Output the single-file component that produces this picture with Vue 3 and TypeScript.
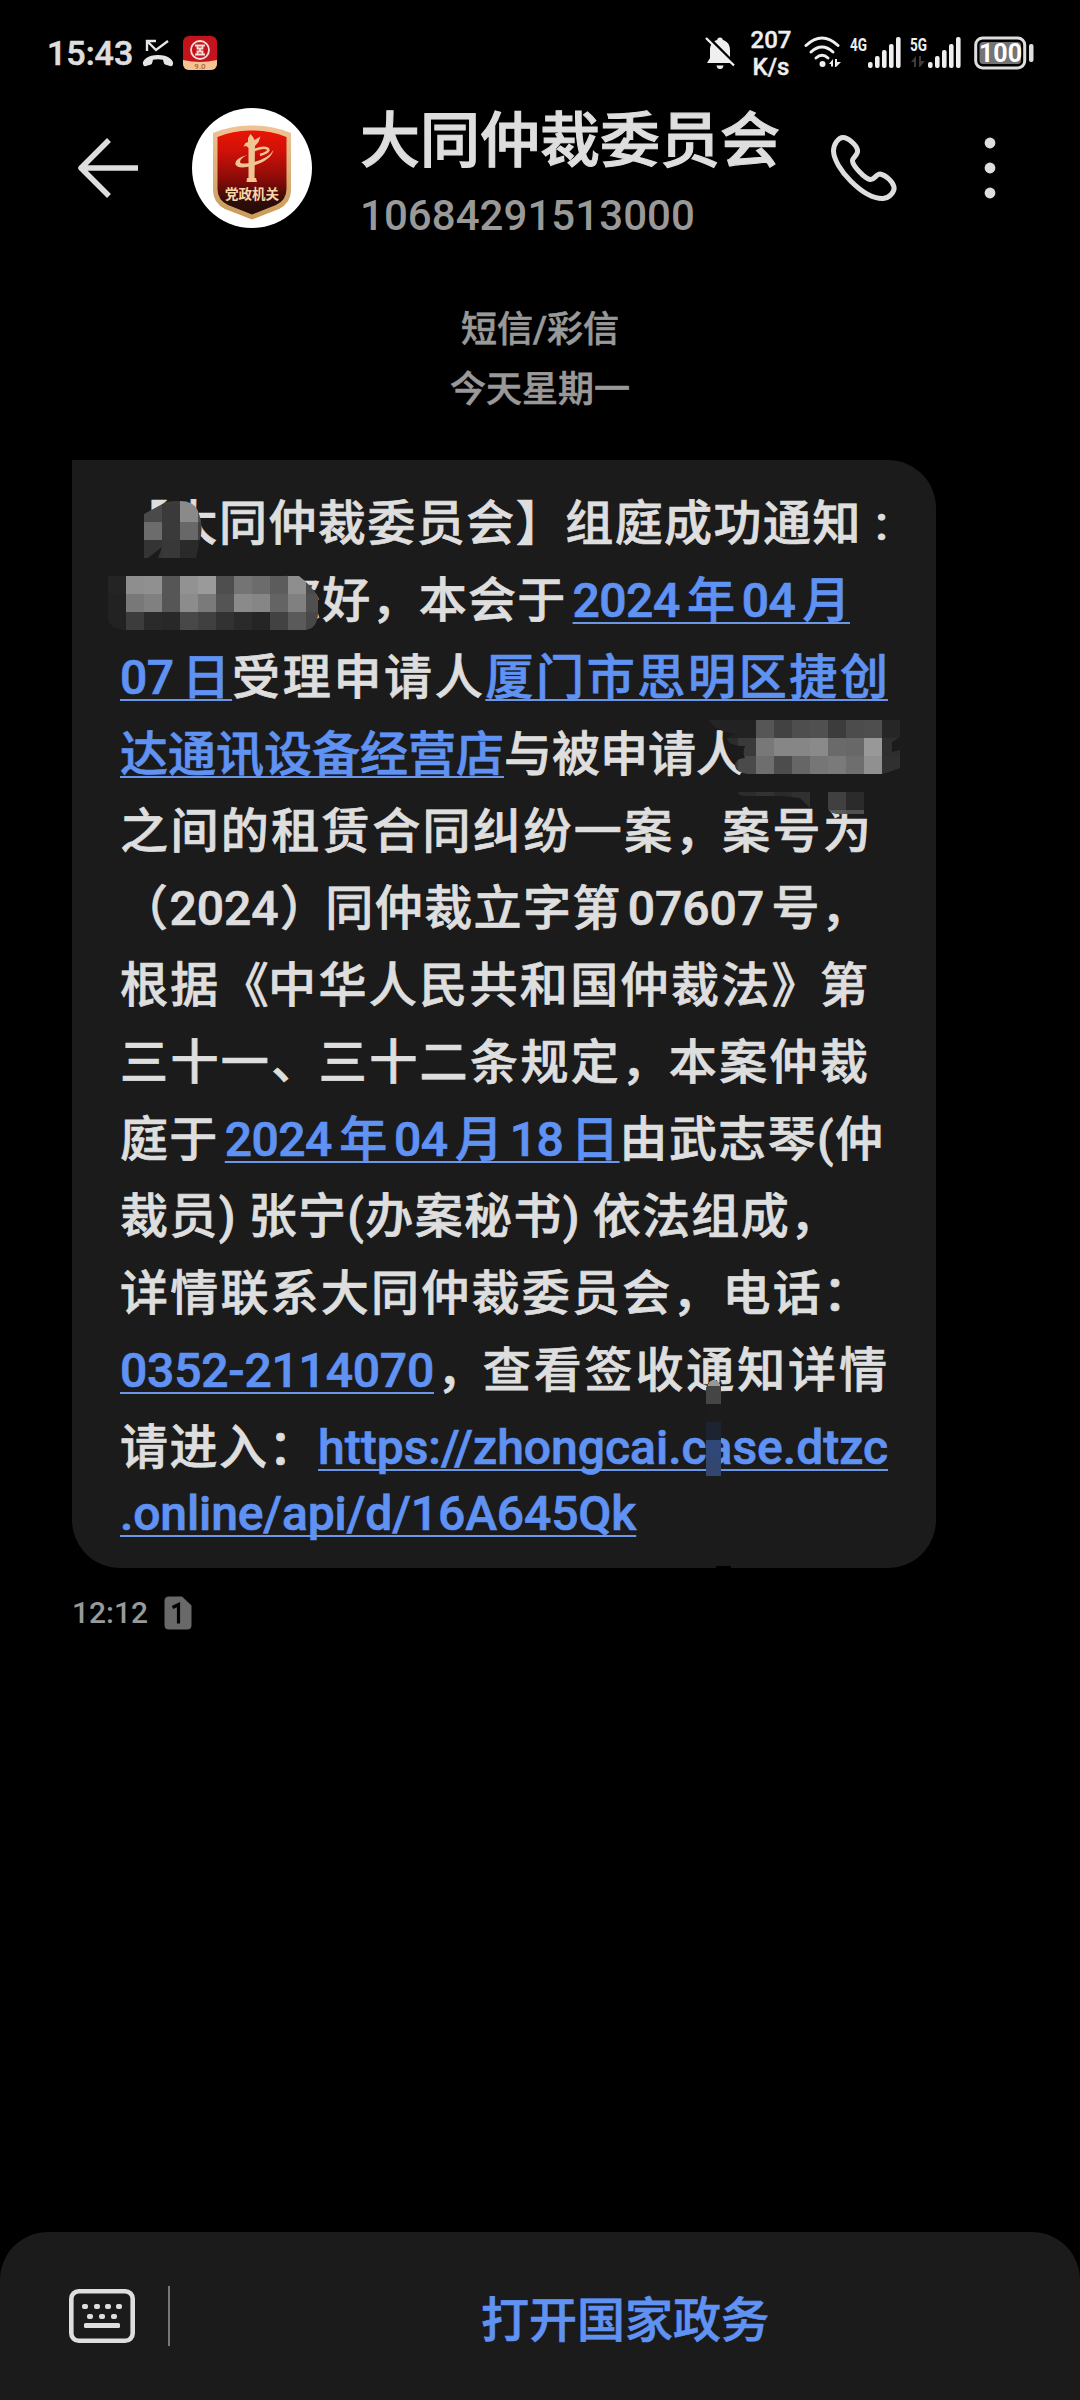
<script setup lang="ts">
interface Run {
  text: string
  link?: boolean
  /** 字距收紧的像素 */
  tight?: number
}

interface Line {
  runs: Run[]
  /** 两端对齐时的行宽，缺省为自然宽度 */
  width?: number
  /** 行首缩进 */
  indent?: number
}

interface Tile {
  x: number
  y: number
  h: number
  color: string
}

const contact = { name: '大同仲裁委员会', number: '10684291513000' }

// 短信正文，按行排布
const lines: Line[] = [
  { width: 768, runs: [{ text: '【大同仲裁委员会】组庭成功通知 :' }] },
  { width: 577, indent: 153, runs: [{ text: '您好' }, { text: '，', tight: 2 }, { text: '本会于' }, { text: '2024年04月', link: true, tight: 0.5 }] },
  { width: 768, runs: [{ text: '07日', link: true, tight: 0.6 }, { text: '受理申请人' }, { text: '厦门市思明区捷创', link: true }] },
  { runs: [{ text: '达通讯设备经营店', link: true }, { text: '与被申请人' }] },
  { width: 751, runs: [{ text: '之间的租赁合同纠纷一案' }, { text: '，', tight: 3 }, { text: '案号为' }] },
  { width: 749, runs: [{ text: '（2024' }, { text: '）', tight: 4 }, { text: '同仲裁立字第07607号，' }] },
  { width: 748, runs: [{ text: '根据' }, { text: '《', tight: 3 }, { text: '中华人民共和国仲裁法' }, { text: '》', tight: 2 }, { text: '第' }] },
  { width: 748, runs: [{ text: '三十一' }, { text: '、', tight: 3 }, { text: '三十二条规定' }, { text: '，', tight: 3 }, { text: '本案仲裁' }] },
  { width: 763, runs: [{ text: '庭于' }, { text: '2024年04月18日', link: true, tight: 0.5 }, { text: '由武志琴(仲' }] },
  { width: 718, runs: [{ text: '裁员) 张宁(办案秘书) 依法组成，' }] },
  { width: 751, runs: [{ text: '详情联系大同仲裁委员会，电话：' }] },
  { width: 767, runs: [{ text: '0352-2114070', link: true, tight: 0.2 }, { text: '，', tight: 5 }, { text: '查看签收通知详情' }] },
  { width: 768, runs: [{ text: '请进入：' }, { text: 'https://zhongcai.case.dtzc', link: true }] },
  { runs: [{ text: '.online/api/d/16A645Qk', link: true, tight: 0.12 }] },
]

// 马赛克色块，每格 18px
const CELL = 18

function mosaic(x: number, y: number, rows: string[][]): Tile[] {
  return rows.flatMap((row, r) => row.map((c, i) => ({
    x: x + i * CELL,
    y: y + r * CELL,
    h: CELL,
    color: `#${c}${c}${c}`,
  })))
}

const titleMask = mosaic(144, 486, [
  ['4a', '3c', '8a', '50'],
  ['4a', '3a', '8a', '50'],
  ['6c', '3a', '68', '40'],
  ['34', '38', '2a', '26'],
])

const nameMask = mosaic(108, 576, [
  ['24', '8e', '90', '56', '92', '9a', '4e', '74', '6c', '5c', '8e', '4a'],
  ['22', '78', '80', '56', '8c', '7a', '54', '8a', '86', '64', '80', '50'],
  ['22', '3c', '2a', '28', '48', '40', '32', '2a', '25', '42', '5a', '48'],
])

const respondentMask = mosaic(702, 720, [
  ['24', '22', '22', '56', '42', '4e', '50', '3c', '4c', '4e', '26'],
  ['24', '2c', '3a', '78', '86', '86', '8a', '6a', '68', '98', '2e'],
  ['24', '3a', '4a', '6e', '4c', '66', '76', '7a', '6e', '90', '30'],
])

const respondentTail = mosaic(738, 792, [
  ['2c', '32', '2a', '30', '1b', '40', '2b'],
  ['1b', '1b', '1b', '1b', '1b', '5a', '50'],
])

const bars = [6, 12, 18, 24, 31]
</script>

<template>
  <div class="screen">
    <header class="status">
      <span class="clock">15:43</span>
      <svg class="missed" width="34" height="30" viewBox="0 0 34 30">
        <path d="M6 12V2H15M6 2L15 11L27 2" fill="none" stroke="#e6e6e6" stroke-width="2.4" />
        <path d="M2 25C1 21 7 16 17 16S33 21 32 25C31.500 27 30.500 27.500 29 27L24 25.500C22.500 25 22.500 22 22 20.800Q17 19.500 12 20.800C11.500 22 11.500 25 10 25.500L5 27C3.500 27.500 2.500 27 2 25Z" fill="#e6e6e6" />
      </svg>
      <svg class="bank" width="34" height="34" viewBox="0 0 34 34">
        <defs>
          <clipPath id="bankClip"><rect width="34" height="34" rx="6" /></clipPath>
        </defs>
        <g clip-path="url(#bankClip)">
          <rect width="34" height="34" fill="#c3141d" />
          <path d="M0 24Q17 28 34 24V34H0Z" fill="#f5c492" />
        </g>
        <circle cx="17" cy="14" r="9" fill="none" stroke="#f6dcd6" stroke-width="1.800" />
        <path d="M12 9.500H22M12 18.500H22M14.500 9.500V12.500H19.500V9.500M14.500 18.500V15.500H19.500V18.500M17 12V16" fill="none" stroke="#f6dcd6" stroke-width="1.800" />
        <text x="17" y="32.500" class="bank-text">9.0</text>
      </svg>
      <span class="spacer" />
      <svg class="bell" width="30" height="34" viewBox="0 0 30 34">
        <path d="M15 1.500C16.800 1.500 17.800 2.600 17.800 4C22.500 5.300 25 9 25 14V22L28 27H2L5 22V14C5 9 7.500 5.300 12.200 4C12.200 2.600 13.200 1.500 15 1.500Z" fill="#efefef" />
        <path d="M11.500 29.500H18.500Q18 33 15 33T11.500 29.500Z" fill="#efefef" />
        <path d="M3 1L31 29" stroke="#000" stroke-width="3" />
        <path d="M1 2L29 29.500" stroke="#efefef" stroke-width="2.400" />
      </svg>
      <span class="speed">207<br>K/s</span>
      <svg class="wifi" width="38" height="32" viewBox="0 0 38 32">
        <g fill="none" stroke="#efefef" stroke-width="3" stroke-linecap="round">
          <path d="M2 9.500Q18 -5.500 34 9.500" />
          <path d="M7 16Q18 6 29 16" />
          <path d="M12 22Q18 16.500 24 22" />
        </g>
        <circle cx="18.500" cy="28" r="3" fill="#efefef" />
        <path d="M25 28L29 23V30.500H27V28ZM31 23H33V26H37L32 31H31Z" fill="#efefef" />
      </svg>
      <svg class="signal" width="54" height="40" viewBox="-2 -8 54 40">
        <text x="0" y="15" textLength="17" lengthAdjust="spacingAndGlyphs" class="net">4G</text>
        <rect v-for="(h, i) in bars" :key="i" :x="18 + i * 7" :y="32 - h" width="4.600" :height="h" rx="2" fill="#efefef" />
      </svg>
      <svg class="signal" width="54" height="40" viewBox="-2 -8 54 40">
        <text x="0" y="15" textLength="17" lengthAdjust="spacingAndGlyphs" class="net">5G</text>
        <path d="M1 26L6 20V31H4V26ZM9 20H11V25H15L10 31H9Z" fill="#3c3c3c" />
        <rect v-for="(h, i) in bars" :key="i" :x="18 + i * 7" :y="32 - h" width="4.600" :height="h" rx="2" fill="#efefef" />
      </svg>
      <svg class="battery" width="60" height="34" viewBox="0 0 60 34">
        <rect x="1.700" y="1.900" width="49" height="30" rx="7" fill="none" stroke="#dedede" stroke-width="3" />
        <rect x="5.500" y="6" width="41.500" height="22" rx="3.500" fill="#747474" />
        <rect x="55" y="8" width="4.500" height="18" rx="2" fill="#dedede" />
        <text x="26.500" y="25.500" class="battery-text">100</text>
      </svg>
    </header>

    <div class="topbar">
      <svg class="back" width="64" height="64" viewBox="0 0 64 64">
        <path d="M62 32H6M33 4L5 32L33 60" fill="none" stroke="#dedede" stroke-width="5.500" stroke-linejoin="round" />
      </svg>
      <svg class="avatar" width="120" height="120" viewBox="0 0 120 120">
        <defs>
          <linearGradient id="shieldRed" x1="0" y1="0" x2="0" y2="1">
            <stop offset="0" stop-color="#ea1405" />
            <stop offset="0.250" stop-color="#cf1108" />
            <stop offset="0.600" stop-color="#850b08" />
            <stop offset="0.850" stop-color="#2d0d0a" />
            <stop offset="1" stop-color="#250b08" />
          </linearGradient>
          <linearGradient id="shieldGold" x1="0" y1="0" x2="0" y2="1">
            <stop offset="0" stop-color="#efc396" />
            <stop offset="1" stop-color="#c99a58" />
          </linearGradient>
        </defs>
        <circle cx="60" cy="60" r="60" fill="#fff" />
        <path d="M21 25Q40 17 60 17.500Q80 17 99 25V82Q99 95 87 101L60 111.500L33 101Q21 95 21 82Z" fill="url(#shieldGold)" />
        <path d="M25.500 29Q42 22 60 22.500Q78 22 94.500 29V81Q94.500 92 84 97L60 106.500L36 97Q25.500 92 25.500 81Z" fill="url(#shieldRed)" />
        <g fill="#f1c593">
          <path d="M56.500 40L54.500 38L51.500 38.500L53.500 35L56 34L56 30L58.500 26L61 29L62.500 32L68.500 28.500L66.500 34L63 38L62.500 70H56.500Z" />
          <path d="M55 70H64L65 74H54.500Z" />
        </g>
        <path d="M62.500 42Q73 38 76 41Q78 44 68 47" fill="none" stroke="#f1c593" stroke-width="2.500" />
        <path d="M55 47Q42 51 43.500 56.500Q46 61.500 60 58Q79 52.500 81.500 42Q77 50 62 54Q49 57 48 54Q48 50.500 55 47Z" fill="#f1c593" />
        <text x="60" y="91" class="badge-text">党政机关</text>
      </svg>
      <div class="who">
        <div class="name">{{ contact.name }}</div>
        <div class="number">{{ contact.number }}</div>
      </div>
      <svg class="call" width="70" height="70" viewBox="829 133 70 70">
        <path d="M843 137.500C838.500 137.500 833.500 144 833.500 151C834 168 863 199 883 198.500C889 198 895 192 894 187C893 182 886 175 880 174C876 174 874 180.500 870 179.500C864 178 853 166 852.500 161C852 158 858.500 155 857.500 150C856.500 145 848 137.500 843 137.500Z" fill="none" stroke="#dedede" stroke-width="5" stroke-linejoin="round" />
      </svg>
      <svg class="more" width="12" height="64" viewBox="0 0 12 64">
        <circle cx="6" cy="7" r="5.400" fill="#dedede" />
        <circle cx="6" cy="32" r="5.400" fill="#dedede" />
        <circle cx="6" cy="57" r="5.400" fill="#dedede" />
      </svg>
    </div>

    <main class="thread">
      <div class="divider-text">
        <div>短信/彩信</div>
        <div>今天星期一</div>
      </div>

      <div class="bubble">
        <div
          v-for="(line, i) in lines"
          :key="i"
          class="line"
          :class="{ justified: line.width }"
          :style="{ width: line.width ? `${line.width}px` : undefined, marginLeft: line.indent ? `${line.indent}px` : undefined }"
        >
          <span
            v-for="(run, j) in line.runs"
            :key="j"
            :class="{ link: run.link }"
            :style="{ letterSpacing: run.tight ? `-${run.tight}px` : undefined }"
          >{{ run.text }}</span>
        </div>

        <!-- 打码遮挡 -->
        <svg class="masks" width="864" height="1108" viewBox="72 460 864 1108" shape-rendering="crispEdges">
          <defs>
            <clipPath id="maskTitle">
              <path d="M144 514L166 502Q172 501 180 501Q194 501 198 511Q204 526 200 540L196 558H158L162 547L148 558H144Z" />
            </clipPath>
            <clipPath id="maskName">
              <path d="M108 576H299Q312 586 318 597V612Q318 628 306 630H122Q108 626 108 620Z" />
            </clipPath>
            <clipPath id="maskRespondent">
              <path d="M709 720H900V737L892 742V752L900 750V768Q890 772 882 774H757Q735 775 735 765Q736 758 745 758Q742 753 745 746Q728 746 727 738L735 734Q713 730 709 720Z" />
            </clipPath>
            <clipPath id="maskTail">
              <path d="M738 792H864V810Q867 810 866 814H836Q828 812 828 808H810L800 798L780 796H745Q738 796 738 792Z" />
            </clipPath>
          </defs>
          <g clip-path="url(#maskTitle)">
            <rect v-for="(t, i) in titleMask" :key="i" :x="t.x" :y="t.y" width="18" :height="t.h" :fill="t.color" />
          </g>
          <g clip-path="url(#maskName)">
            <rect v-for="(t, i) in nameMask" :key="i" :x="t.x" :y="t.y" width="18" :height="t.h" :fill="t.color" />
          </g>
          <g clip-path="url(#maskRespondent)">
            <rect v-for="(t, i) in respondentMask" :key="i" :x="t.x" :y="t.y" width="18" :height="t.h" :fill="t.color" />
          </g>
          <g clip-path="url(#maskTail)">
            <rect v-for="(t, i) in respondentTail" :key="i" :x="t.x" :y="t.y" width="18" :height="t.h" :fill="t.color" />
          </g>
          <path d="M706 1404V1388Q708 1380 714 1380T721 1388V1404Z" fill="#454545" />
          <path d="M708 1386Q709 1380 714 1380T720 1386Z" fill="#989898" />
          <rect x="706" y="1404" width="15" height="18" fill="#1c1c1c" />
          <rect x="706" y="1422" width="15" height="18" fill="#1e2332" />
          <rect x="706" y="1440" width="15" height="18" fill="#2f4878" />
          <rect x="706" y="1458" width="15" height="18" fill="#33466f" />
          <rect x="716" y="1566" width="15" height="2" fill="#000" />
        </svg>
      </div>

      <div class="meta">
        <span>12:12</span>
        <svg width="28" height="34" viewBox="0 0 28 34">
          <path d="M5 0.500H18L27.500 9.500V29Q27.500 33.500 23 33.500H5Q0.500 33.500 0.500 29V5Q0.500 0.500 5 0.500Z" fill="#696969" />
          <path d="M8.500 11.500L14.500 8.500V27.500" fill="none" stroke="#000" stroke-width="3.200" />
        </svg>
      </div>
    </main>

    <footer class="menu">
      <svg class="keyboard" width="66" height="54" viewBox="0 0 66 54">
        <rect x="2.300" y="2.300" width="61.400" height="49.400" rx="7.500" fill="none" stroke="#dedede" stroke-width="4.600" />
        <g fill="#dedede">
          <rect x="13" y="15" width="6" height="5" rx="2" />
          <rect x="25" y="15" width="6" height="5" rx="2" />
          <rect x="36" y="15" width="6" height="5" rx="2" />
          <rect x="47" y="15" width="6" height="5" rx="2" />
          <rect x="18" y="25" width="6" height="5" rx="2" />
          <rect x="30" y="25" width="6" height="5" rx="2" />
          <rect x="42" y="25" width="6" height="5" rx="2" />
          <rect x="15" y="34" width="36" height="5" rx="1.500" />
        </g>
      </svg>
      <span class="rule" />
      <span class="action">打开国家政务</span>
    </footer>
  </div>
</template>

<style>
body {
  background: #000;
}
</style>

<style scoped>
.screen {
  display: flex;
  flex-direction: column;
  width: 1080px;
  height: 2400px;
  overflow: hidden;
  background: #000;
  color: #dedede;
  font-family: Roboto, "Noto Sans CJK SC", sans-serif;
  font-weight: 500;
}

/* ══════════════ 状态栏 ══════════════ */
.status {
  display: flex;
  align-items: flex-start;
  height: 100px;
  box-sizing: border-box;
  padding: 36px 46px 0 47px;
  flex-shrink: 0;
}
.clock {
  width: 94px;
  font-size: 34px;
  line-height: 34px;
  -webkit-text-stroke: 0.6px currentColor;
}
.missed {
  margin-top: 3px;
}
.bank {
  margin-left: 8px;
}
.bank-text {
  font-size: 8px;
  text-anchor: middle;
  fill: #b4622f;
}
.spacer {
  flex: 1;
}
.speed {
  width: 50px;
  margin: -9px 8px 0 11px;
  font-size: 24px;
  line-height: 27px;
  text-align: center;
  color: #efefef;
  -webkit-text-stroke: 0.4px currentColor;
}
.signal {
  margin: -8px 0 0 6px;
}
.battery {
  margin-left: 12px;
}
.net {
  font-size: 19px;
  font-weight: 700;
  fill: #efefef;
}
.battery-text {
  font-size: 25px;
  font-weight: 700;
  text-anchor: middle;
  fill: #fff;
}

/* ══════════════ 顶部栏 ══════════════ */
.topbar {
  display: flex;
  align-items: center;
  height: 136px;
  padding: 0 84px 0 76px;
  flex-shrink: 0;
}
.avatar {
  margin-left: 52px;
}
.badge-text {
  font-family: "Noto Sans CJK SC", sans-serif;
  font-size: 13.5px;
  font-weight: 700;
  text-anchor: middle;
  fill: #fad6a5;
}
.who {
  flex: 1;
  margin-left: 48px;
  padding-top: 15px;
}
.name {
  font-size: 60px;
  line-height: 80px;
  white-space: nowrap;
  -webkit-text-stroke: 1.1px currentColor;
}
.number {
  font-size: 42px;
  line-height: 67px;
  color: #999;
  letter-spacing: 0.05px;
}
.call {
  margin-right: 85px;
}

/* ══════════════ 会话 ══════════════ */
.thread {
  flex: 1;
}
.divider-text {
  box-sizing: border-box;
  padding-top: 64px;
  height: 224px;
  font-size: 36px;
  line-height: 60px;
  text-align: center;
  color: #999;
  -webkit-text-stroke: 0.6px currentColor;
}
.bubble {
  position: relative;
  box-sizing: border-box;
  width: 864px;
  height: 1108px;
  margin-left: 72px;
  padding: 25px 48px 0;
  border-radius: 0 48px 48px 48px;
  background: #1b1b1b;
}
.line {
  font-size: 48px;
  line-height: 77px;
  white-space: nowrap;
  text-spacing-trim: space-all;
  text-autospace: normal;
  -webkit-text-stroke: 0.7px currentColor;
}
.line:last-of-type {
  line-height: 56px;
}
.justified {
  white-space: normal;
  text-align: justify;
  text-align-last: justify;
}
.link {
  color: #5f92f2;
  text-decoration: underline;
  text-decoration-color: #6c96e6;
  text-decoration-thickness: 2px;
  text-decoration-skip-ink: none;
  text-underline-offset: 5px;
}
.masks {
  position: absolute;
  top: 0;
  left: 0;
}
.meta {
  display: flex;
  align-items: center;
  gap: 16px;
  padding: 27px 0 0 72px;
  font-size: 30px;
  line-height: 36px;
  color: #999;
}

/* ══════════════ 底部菜单 ══════════════ */
.menu {
  display: flex;
  align-items: center;
  box-sizing: border-box;
  height: 168px;
  padding: 0 0 0 69px;
  border-radius: 48px 48px 0 0;
  background: #1b1b1b;
  flex-shrink: 0;
}
.rule {
  width: 2px;
  height: 60px;
  margin-left: 33px;
  background: #777;
}
.action {
  flex: 1;
  font-size: 48px;
  text-align: center;
  color: #5f92f2;
  -webkit-text-stroke: 0.7px currentColor;
}
</style>
